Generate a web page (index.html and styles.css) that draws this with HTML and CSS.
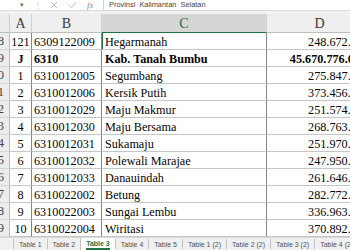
FILE: index.html
```html
<!DOCTYPE html>
<html>
<head>
<meta charset="utf-8">
<link rel="stylesheet" href="styles.css">
</head>
<body>
<div class="app">
  <div class="fbar">
    <div class="namebox"><span class="caret">▾</span></div>
    <div class="tools">
      <span class="dots">⋮</span>
      <svg class="ico" width="8" height="8" viewBox="0 0 8 8"><path d="M1 1L7 7M7 1L1 7" stroke="#b4b4b4" stroke-width="0.9" fill="none"/></svg>
      <svg class="ico" width="9" height="8" viewBox="0 0 9 8"><path d="M1 4.2L3.4 6.6L8 1.2" stroke="#b4b4b4" stroke-width="0.9" fill="none"/></svg>
      <span class="fx">fx</span>
    </div>
    <div class="formula">Provinsi&nbsp; Kalimantan&nbsp; Selatan</div>
  </div>
  <div class="gap"></div>
  <div class="sheet">
    <div class="corner"></div>
    <div class="colh">A</div>
    <div class="colh">B</div>
    <div class="colh sel">C</div>
    <div class="colh">D</div>

    <div class="rowh"><span>18</span></div><div class="c ca">121</div><div class="c cb">6309122009</div><div class="c cc active">Hegarmanah</div><div class="c cd">248.672.518</div>
    <div class="rowh"><span>19</span></div><div class="c ca b">J</div><div class="c cb b">6310</div><div class="c cc b">Kab. Tanah Bumbu</div><div class="c cd b tot">45.670.776.016</div>
    <div class="rowh"><span>20</span></div><div class="c ca">1</div><div class="c cb">6310012005</div><div class="c cc">Segumbang</div><div class="c cd">275.847.221</div>
    <div class="rowh"><span>21</span></div><div class="c ca">2</div><div class="c cb">6310012006</div><div class="c cc">Kersik Putih</div><div class="c cd">373.456.480</div>
    <div class="rowh"><span>22</span></div><div class="c ca">3</div><div class="c cb">6310012029</div><div class="c cc">Maju Makmur</div><div class="c cd">251.574.093</div>
    <div class="rowh"><span>23</span></div><div class="c ca">4</div><div class="c cb">6310012030</div><div class="c cc">Maju Bersama</div><div class="c cd">268.763.712</div>
    <div class="rowh"><span>24</span></div><div class="c ca">5</div><div class="c cb">6310012031</div><div class="c cc">Sukamaju</div><div class="c cd">251.970.354</div>
    <div class="rowh"><span>25</span></div><div class="c ca">6</div><div class="c cb">6310012032</div><div class="c cc">Polewali Marajae</div><div class="c cd">247.950.618</div>
    <div class="rowh"><span>26</span></div><div class="c ca">7</div><div class="c cb">6310012033</div><div class="c cc">Danauindah</div><div class="c cd">261.646.275</div>
    <div class="rowh"><span>27</span></div><div class="c ca">8</div><div class="c cb">6310022002</div><div class="c cc">Betung</div><div class="c cd">282.772.940</div>
    <div class="rowh"><span>28</span></div><div class="c ca">9</div><div class="c cb">6310022003</div><div class="c cc">Sungai Lembu</div><div class="c cd">336.963.107</div>
    <div class="rowh"><span>29</span></div><div class="c ca">10</div><div class="c cb">6310022004</div><div class="c cc">Wiritasi</div><div class="c cd">370.892.466</div>
  </div>
  <div class="tabs">
    <div class="tab">Table 1</div>
    <div class="tab">Table 2</div>
    <div class="tab on"><span>Table 3</span></div>
    <div class="tab">Table 4</div>
    <div class="tab">Table 5</div>
    <div class="tab">Table 1 (2)</div>
    <div class="tab">Table 2 (2)</div>
    <div class="tab">Table 3 (2)</div>
    <div class="tab">Table 4 (2)</div>
    <div class="tab last"></div>
  </div>
</div>
</body>
</html>
```
FILE: styles.css
```css
* { box-sizing: border-box; }
html, body { margin: 0; padding: 0; }
body {
  width: 350px;
  height: 250px;
  overflow: hidden;
  background: #ffffff;
}
.app {
  width: 350px;
  height: 250px;
  overflow: hidden;
  display: flex;
  flex-direction: column;
}
.fbar {
  height: 11px;
  display: flex;
  background: #ffffff;
  border-bottom: 1px solid #dadada;
  font-family: "Liberation Sans", Arial, sans-serif;
}
.namebox {
  width: 27px;
  display: flex;
  justify-content: flex-end;
  align-items: center;
  padding-right: 3px;
}
.caret {
  font-size: 7px;
  color: #6a6a6a;
  line-height: 8px;
}
.tools {
  width: 76px;
  display: flex;
  align-items: center;
  padding-left: 7px;
}
.dots {
  font-size: 8px;
  color: #c0c0c0;
  width: 14px;
  line-height: 9px;
}
.ico { margin-right: 10px; }
.tools .ico:first-of-type { margin-left: 2px; }
.fx {
  font-family: "Liberation Serif", serif;
  font-style: italic;
  font-size: 9px;
  color: #8a8a8a;
  line-height: 9px;
}
.formula {
  flex: 1;
  border-left: 1px solid #d4d4d4;
  padding-left: 5px;
  font-size: 7.4px;
  color: #444444;
  line-height: 10px;
  white-space: nowrap;
}
.gap {
  height: 3px;
  background: #f2f2f2;
}
.sheet {
  display: grid;
  grid-template-columns: 10px 22px 70px 165px 106px;
  grid-template-rows: 19px;
  grid-auto-rows: 17px;
  width: 373px;
  font-family: "Liberation Serif", "Times New Roman", serif;
  font-size: 12.2px;
  color: #050505;
}
.corner {
  background: #ececec;
  border-right: 1px solid #cfcfcf;
  border-bottom: 1px solid #bdbdbd;
}
.colh {
  background: #efefef;
  border-right: 1px solid #d2d2d2;
  border-bottom: 1px solid #bdbdbd;
  display: flex;
  align-items: center;
  justify-content: center;
  font-size: 14px;
  color: #3a3a3a;
  padding-top: 1px;
}
.colh:last-child { padding-right: 4px; }
.colh.sel {
  background: #d6d6d6;
  color: #217346;
  border-bottom: 1px solid #217346;
}
.rowh {
  background: #ececec;
  border-right: 1px solid #bdbdbd;
  border-bottom: 1px solid #d6d6d6;
  display: flex;
  justify-content: flex-end;
  align-items: center;
  padding-right: 5px;
  overflow: hidden;
  color: #444444;
  font-size: 12.5px;
}
.c {
  border-right: 1px solid #858585;
  border-bottom: 1px solid #c6c6c6;
  display: flex;
  align-items: center;
  white-space: nowrap;
  padding: 1px 2px 0 2px;
  line-height: 16px;
}
.ca { justify-content: center; }
.cb { padding-left: 2px; }
.cc { padding-left: 3px; }
.cd { justify-content: flex-end; padding-right: 3px; }
.cd.tot { padding-right: 6px; }
.b { font-weight: bold; }
.active { box-shadow: inset 1px 0 0 #217346; }
.tabs {
  height: 13px;
  flex: none;
  display: flex;
  align-items: stretch;
  background: #f0f0f0;
  border-top: 1px solid #d8d8d8;
  padding-left: 13px;
  font-family: "Liberation Sans", Arial, sans-serif;
  font-size: 7px;
  color: #505050;
  white-space: nowrap;
}
.tab {
  display: flex;
  align-items: center;
  padding: 0 5px;
  border-left: 1px solid #c2c2c2;
  margin: 1px 0;
  line-height: 9px;
}
.tab.on {
  background: #ffffff;
  margin: 0;
  color: #217346;
  font-weight: bold;
  align-items: flex-end;
}
.tab.on span {
  border-bottom: 2px solid #217346;
  line-height: 9px;
}
```
